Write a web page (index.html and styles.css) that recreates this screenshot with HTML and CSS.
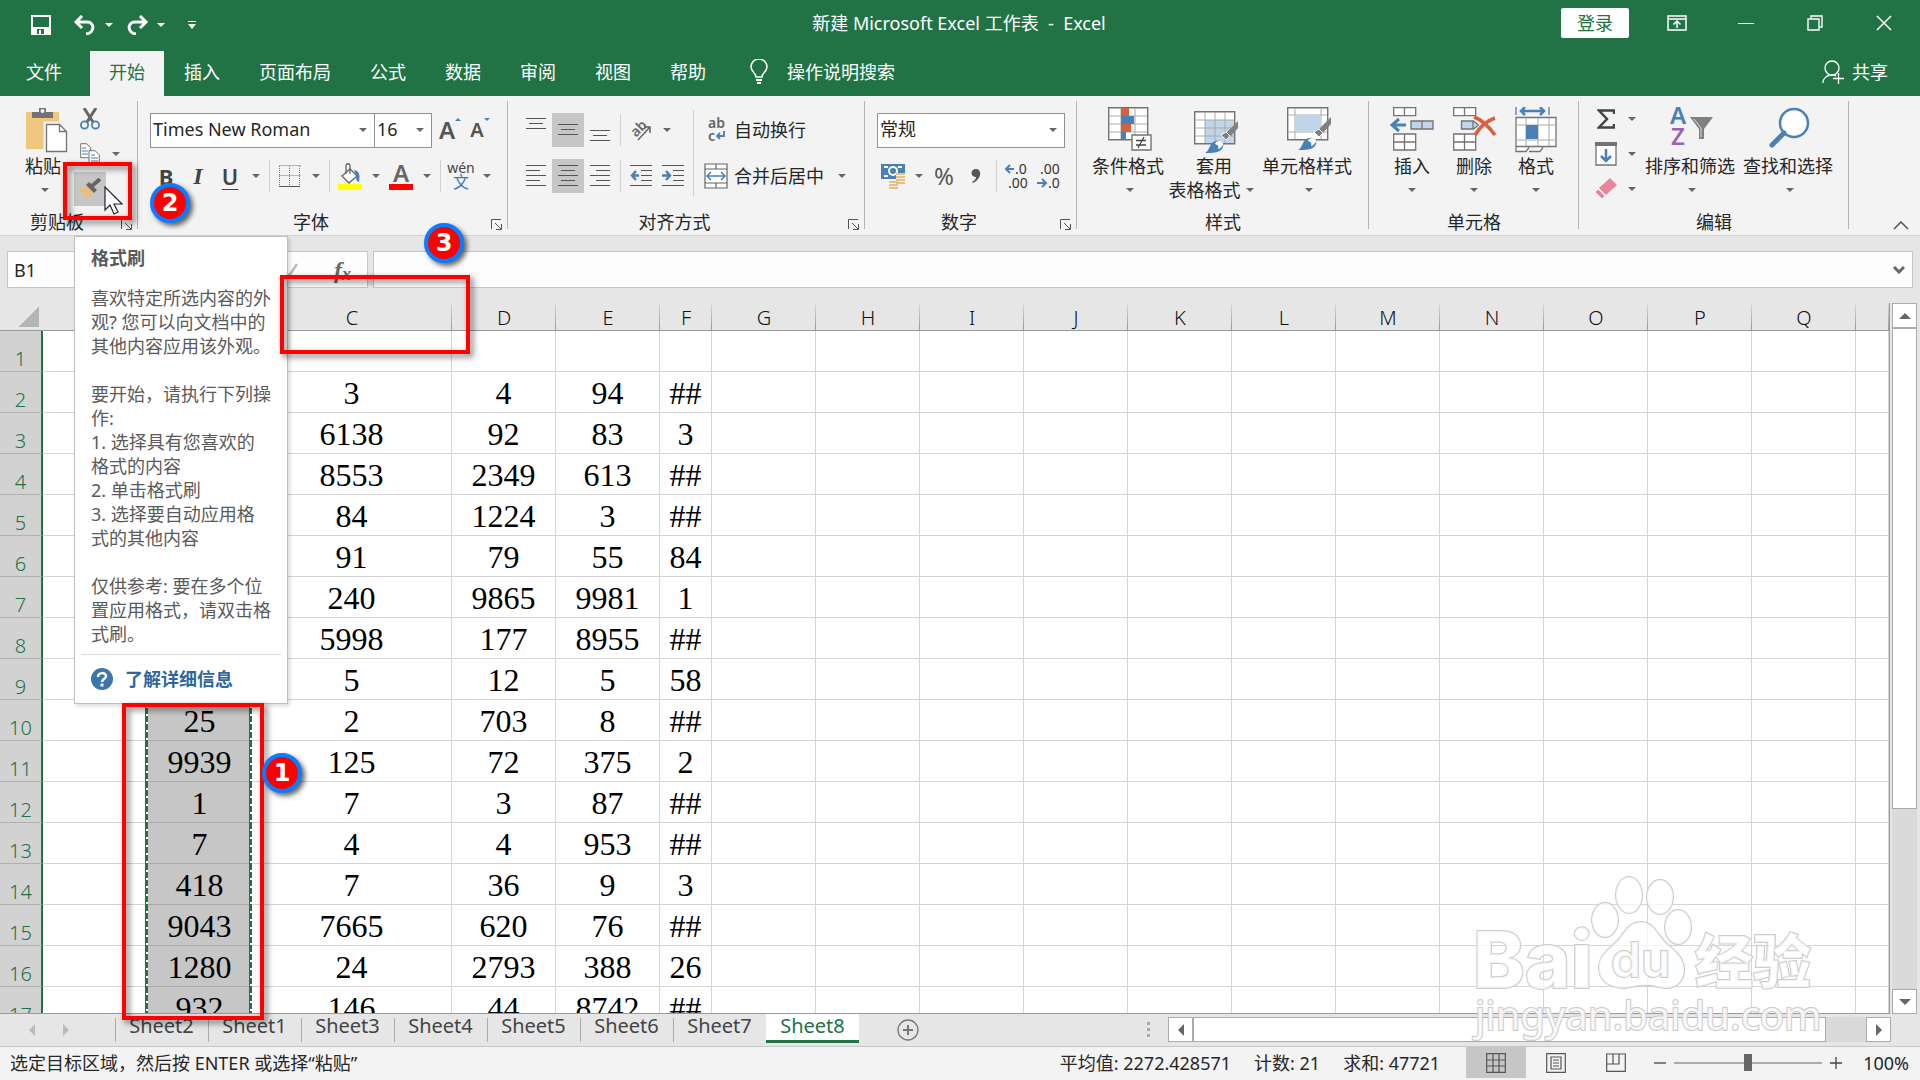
FILE: index.html
```html
<!DOCTYPE html>
<html lang="zh-CN">
<head>
<meta charset="utf-8">
<title>新建 Microsoft Excel 工作表 - Excel</title>
<link rel="stylesheet" href="styles.css">
</head>
<body>
<div class="app">
  <header class="titlebar">
    <div class="quick">
      <button class="qbtn" aria-label="保存"><svg width="20" height="20" viewBox="0 0 20 20"><path d="M1 1h18v18H1z" fill="none" stroke="#fff" stroke-width="2"/><path d="M1 12h18v7H1z" fill="#fff"/><path d="M6 14h7v5H6z" fill="#217346"/><path d="M8 15h2v4H8z" fill="#fff"/></svg></button>
      <button class="qbtn" aria-label="撤消"><svg width="24" height="20" viewBox="0 0 24 20"><path d="M9 1 3 7l6 6M3 7h11c8 0 8 11-1 12" fill="none" stroke="#fff" stroke-width="3"/></svg></button>
      <span class="dd light"></span>
      <button class="qbtn" aria-label="恢复"><svg width="24" height="20" viewBox="0 0 24 20"><path d="m15 1 6 6-6 6M21 7H10c-8 0-8 11 1 12" fill="none" stroke="#fff" stroke-width="3"/></svg></button>
      <span class="dd light"></span>
      <button class="qbtn last" aria-label="自定义快速访问工具栏"><svg width="8" height="8" viewBox="0 0 8 8"><path d="M0 0h8v1H0zM0 3h8L4 8z" fill="#fff"/></svg></button>
    </div>
    <h1 class="title">新建 Microsoft Excel 工作表 &nbsp;-&nbsp; Excel</h1>
    <div class="window">
      <button class="login">登录</button>
      <button class="wbtn" aria-label="功能区显示选项"><svg width="20" height="16" viewBox="0 0 20 16"><path d="M1 1h18v14H1zM1 4h18M10 13V6M6.500 9.500 10 6l3.500 3.500" fill="none" stroke="#fff" stroke-width="1.500"/></svg></button>
      <button class="wbtn" aria-label="最小化"><svg width="16" height="16" viewBox="0 0 16 16"><path d="M0 8.500h16" stroke="#fff"/></svg></button>
      <button class="wbtn" aria-label="还原"><svg width="16" height="16" viewBox="0 0 16 16"><path d="M1 4h11v11H1zM4 4V1h11v11h-3" fill="none" stroke="#fff" stroke-width="1.400"/></svg></button>
      <button class="wbtn" aria-label="关闭"><svg width="16" height="16" viewBox="0 0 16 16"><path d="m1 1 14 14M15 1 1 15" stroke="#fff" stroke-width="1.500"/></svg></button>
    </div>
  </header>
  <nav class="tabs">
    <button class="tab file">文件</button>
    <button class="tab active">开始</button>
    <button class="tab">插入</button>
    <button class="tab">页面布局</button>
    <button class="tab">公式</button>
    <button class="tab">数据</button>
    <button class="tab">审阅</button>
    <button class="tab">视图</button>
    <button class="tab">帮助</button>
    <button class="tab tell"><svg width="18" height="26" viewBox="0 0 18 26"><path d="M6 18c0-4-5-5-5-10a8 8 0 0 1 16 0c0 5-5 6-5 10z" fill="none" stroke="#fff" stroke-width="1.500"/><path d="M6 20h6v2H6zM7 23h4v2H7z" fill="#fff"/></svg>操作说明搜索</button>
    <button class="tab share"><svg width="22" height="24" viewBox="0 0 22 24"><circle cx="10" cy="8" r="7" fill="none" stroke="#fff" stroke-width="1.300"/><path d="M1 23c0-5 4-8 9-8 2 0 3 0 4 1M11 18.500h11M16.500 13v11" fill="none" stroke="#fff" stroke-width="1.300"/></svg>共享</button>
  </nav>

  <section class="ribbon">
    <div class="group clipboard">
      <div class="body">
        <button class="big paste"><svg width="42" height="46" viewBox="0 0 42 46"><path d="M0 5h33v37H0z" fill="#edc87e"/><path d="M6 5h7V1h7v4h7v6H6z" fill="#737373"/><circle cx="16.500" cy="4" r="2" fill="#f3f3f3"/><path d="M19 16h15l7 8v21H19z" fill="#fff" stroke="#f3f3f3" stroke-width="3"/><path d="M20.500 17.500h13l7 7v20h-20zM33.500 17.500v7h7" fill="#fff" stroke="#737373" stroke-width="1.300"/></svg><span>粘贴</span><i class="dd"></i></button>
        <div class="stack">
          <div class="line"><button class="btn" aria-label="剪切"><svg width="20" height="22" viewBox="0 0 20 22"><path d="m4 0 9 14M16 0 7 14" stroke="#666" stroke-width="3"/><circle cx="4.500" cy="17" r="3.600" fill="none" stroke="#4a80b8" stroke-width="1.800"/><circle cx="15.500" cy="17" r="3.600" fill="none" stroke="#4a80b8" stroke-width="1.800"/></svg></button></div>
          <div class="line"><button class="btn" aria-label="复制"><svg width="20" height="22" viewBox="0 0 20 22"><path d="M.7.7h6l4 4v10h-10z" fill="#fff" stroke="#737373"/><path d="M2 5h4M2 8h6M2 11h6" stroke="#4a80b8"/><path d="M9 7.700h6l4.300 4v10H9z" fill="#fff" stroke="#737373"/><path d="M11 12h4M11 15h7M11 18h7" stroke="#4a80b8"/></svg></button><i class="dd"></i></div>
          <div class="line"><button class="btn on" aria-label="格式刷"><svg width="24" height="22" viewBox="0 0 24 22"><path d="m1 11 9-3 6 7-7 6z" fill="#e9bf7d"/><path d="m8 7 3-3 8 8-3 3z" fill="#666"/><path d="m14 8 8-7" stroke="#666" stroke-width="4"/></svg></button></div>
        </div>
      </div>
      <div class="label"><span>剪贴板</span><button class="launch" aria-label="剪贴板选项"><svg width="11" height="11" viewBox="0 0 11 11"><path d="M.5 10V.5H10M4 4l6 6M10.500 5v5.500H5" fill="none" stroke="#555"/></svg></button></div>
    </div>

    <div class="group font">
      <div class="body rows">
        <div class="row">
          <span class="combo wide"><select aria-label="字体"><option>Times New Roman</option></select></span><span class="combo size"><select aria-label="字号"><option>16</option></select></span>
          <button class="btn grow" aria-label="增大字号"><b>A</b><i class="up"></i></button>
          <button class="btn shrink" aria-label="减小字号"><b>A</b><i class="down"></i></button>
        </div>
        <div class="row">
          <button class="btn bold">B</button><button class="btn ital">I</button><button class="btn under">U</button><i class="dd"></i><i class="sep"></i>
          <button class="btn" aria-label="边框"><svg width="22" height="22" viewBox="0 0 22 22"><path d="M.5.5h21M.5 10.500h21M.5 1v20M10.500 1v20M20.500 1v20" stroke="#777" stroke-dasharray="1 1"/><path d="M0 21.500h21" stroke="#555"/></svg></button><i class="dd"></i><i class="sep"></i>
          <button class="btn" aria-label="填充颜色"><svg width="24" height="27" viewBox="0 0 24 27"><path d="m4 13 8-7 7 7-8 7z" fill="#fff" stroke="#666" stroke-width="1.300"/><path d="M8 11V3c0-3 4-3 4 0v8" fill="none" stroke="#666" stroke-width="1.300"/><path d="M16 7c6 1 6 6 5 12-3-1-3-4-3-7z" fill="#4a80b8"/><path d="M0 21h24v6H0z" fill="#ff0"/></svg></button><i class="dd"></i>
          <button class="btn" aria-label="字体颜色"><svg width="24" height="27" viewBox="0 0 24 27"><text x="12" y="19" text-anchor="middle" class="ia">A</text><path d="M0 21h24v6H0z" fill="red"/></svg></button><i class="dd"></i><i class="sep"></i>
          <button class="btn wen" aria-label="拼音"><small>wén</small><em>文</em></button><i class="dd"></i>
        </div>
      </div>
      <div class="label"><span>字体</span><button class="launch" aria-label="字体选项"><svg width="11" height="11" viewBox="0 0 11 11"><path d="M.5 10V.5H10M4 4l6 6M10.500 5v5.500H5" fill="none" stroke="#555"/></svg></button></div>
    </div>

    <div class="group align">
      <div class="body">
        <div class="rows">
          <div class="row">
            <button class="btn" aria-label="顶端对齐"><svg width="20" height="24" viewBox="0 0 20 24"><path d="M0 .5h20M3 5.500h14M0 10.500h20" stroke="#555"/></svg></button>
            <button class="btn on" aria-label="垂直居中"><svg width="20" height="24" viewBox="0 0 20 24"><path d="M0 6.500h20M3 11.500h14M0 16.500h20" stroke="#555"/></svg></button>
            <button class="btn" aria-label="底端对齐"><svg width="20" height="24" viewBox="0 0 20 24"><path d="M0 12.500h20M3 17.500h14M0 22.500h20" stroke="#555"/></svg></button><i class="sep"></i>
            <button class="btn" aria-label="方向"><svg width="22" height="22" viewBox="0 0 22 22"><text x="1" y="15" transform="rotate(-45 8 11)" class="iab">ab</text><path d="M8 21 20 8M14 8h6v6" fill="none" stroke="#666" stroke-width="1.500"/></svg></button><i class="dd"></i>
          </div>
          <div class="row">
            <button class="btn" aria-label="左对齐"><svg width="20" height="22" viewBox="0 0 20 22"><path d="M0 .5h20M0 5.500h14M0 10.500h20M0 15.500h14M0 20.500h20" stroke="#555"/></svg></button>
            <button class="btn on" aria-label="居中"><svg width="20" height="22" viewBox="0 0 20 22"><path d="M0 .5h20M3 5.500h14M0 10.500h20M3 15.500h14M0 20.500h20" stroke="#555"/></svg></button>
            <button class="btn" aria-label="右对齐"><svg width="20" height="22" viewBox="0 0 20 22"><path d="M0 .5h20M6 5.500h14M0 10.500h20M6 15.500h14M0 20.500h20" stroke="#555"/></svg></button><i class="sep"></i>
            <button class="btn" aria-label="减少缩进量"><svg width="22" height="22" viewBox="0 0 22 22"><path d="M0 .5h22M11 5.500h11M11 10.500h11M11 15.500h11M0 20.500h22" stroke="#555"/><path d="M9 10.500H2M6 6l-4 4.500L6 15" fill="none" stroke="#4a80b8" stroke-width="2.500"/></svg></button>
            <button class="btn" aria-label="增加缩进量"><svg width="22" height="22" viewBox="0 0 22 22"><path d="M0 .5h22M11 5.500h11M11 10.500h11M11 15.500h11M0 20.500h22" stroke="#555"/><path d="M0 10.500h8M4 6l4 4.500L4 15" fill="none" stroke="#4a80b8" stroke-width="2.500"/></svg></button>
          </div>
        </div>
        <i class="sep tall"></i>
        <div class="rows">
          <div class="row"><button class="text"><svg width="24" height="26" viewBox="0 0 24 26"><text x="4" y="11" class="isub">ab</text><text x="4" y="24" class="isub">c</text><path d="M20 14v5h-6M16 16l-3 3 3 3" fill="none" stroke="#4a80b8" stroke-width="1.800"/></svg>自动换行</button></div>
          <div class="row"><button class="text"><svg width="24" height="26" viewBox="0 0 24 26"><path d="M1 1h22v24H1zM1 6h22M1 20h22M12 1v5M12 20v5" fill="#fff" stroke="#666" stroke-width="1.200"/><path d="M3 13h18M7 9l-4 4 4 4M17 9l4 4-4 4" fill="none" stroke="#4a80b8" stroke-width="1.500"/></svg>合并后居中</button><i class="dd far"></i></div>
        </div>
      </div>
      <div class="label"><span>对齐方式</span><button class="launch" aria-label="对齐选项"><svg width="11" height="11" viewBox="0 0 11 11"><path d="M.5 10V.5H10M4 4l6 6M10.500 5v5.500H5" fill="none" stroke="#555"/></svg></button></div>
    </div>

    <div class="group number">
      <div class="body rows">
        <div class="row"><span class="combo format"><select aria-label="数字格式"><option>常规</option></select></span></div>
        <div class="row">
          <button class="btn" aria-label="会计数字格式"><svg width="24" height="26" viewBox="0 0 24 26"><path d="M0 1h24v15H0z" fill="#4a80b8"/><path d="M3 4h4M17 4h4M3 13h4" stroke="#fff" stroke-width="2"/><circle cx="12" cy="8" r="5" fill="#fff"/><circle cx="12" cy="8" r="3" fill="#4a80b8"/><path d="M15 10h9v11H15zM8 17h10v9H8z" fill="#f3f3f3"/><path d="M15 11h9M15 14h9M15 17h9M15 20h9M8 19h9M8 22h9M8 25h9" stroke="#e9bf7d" stroke-width="2"/></svg></button><i class="dd"></i>
          <button class="btn pct">%</button>
          <button class="btn" aria-label="千位分隔样式"><svg width="10" height="16" viewBox="0 0 10 16"><path d="M5 1c6 0 6 10-3 14l-1-1c3-2 4-3 4-5C-1 9-1 1 5 1z" fill="#555"/></svg></button><i class="sep"></i>
          <button class="btn" aria-label="增加小数位数"><svg width="24" height="26" viewBox="0 0 24 26"><text x="10" y="11" class="idec">.0</text><text x="3" y="25" class="idec">.00</text><path d="M9 6H2M5 2 1 6l4 4" fill="none" stroke="#4a80b8" stroke-width="2"/></svg></button>
          <button class="btn" aria-label="减少小数位数"><svg width="24" height="26" viewBox="0 0 24 26"><text x="3" y="11" class="idec">.00</text><text x="11" y="25" class="idec">.0</text><path d="M0 20h8M5 16l4 4-4 4" fill="none" stroke="#4a80b8" stroke-width="2"/></svg></button>
        </div>
      </div>
      <div class="label"><span>数字</span><button class="launch" aria-label="数字选项"><svg width="11" height="11" viewBox="0 0 11 11"><path d="M.5 10V.5H10M4 4l6 6M10.500 5v5.500H5" fill="none" stroke="#555"/></svg></button></div>
    </div>

    <div class="group styles">
      <div class="body">
        <button class="big"><svg width="44" height="46" viewBox="0 0 44 46"><path d="M.7.7h39v32h-39z" fill="#fff" stroke="#737373" stroke-width="1.400"/><path d="M1 9h38M1 17h38M1 25h38M13 1v31M27 1v31" stroke="#aaa"/><path d="M13 1h8v8h-8zM13 17h10v8H13z" fill="#d8603f"/><path d="M13 9h13v8H13zM13 25h5v7h-5z" fill="#4a80b8"/><path d="M24 28h19v15H24z" fill="#fff" stroke="#737373" stroke-width="1.400"/><path d="M28 33.500h10M28 38h10M36 30l-6 11" stroke="#444" stroke-width="1.300"/></svg><span>条件格式</span><i class="dd"></i></button>
        <button class="big"><svg width="46" height="46" viewBox="0 0 46 46"><path d="M1.700 4.700h40v32h-40z" fill="#fff" stroke="#737373" stroke-width="1.400"/><path d="M12 13h29v23H12z" fill="#c0d4ea"/><path d="M2 13h39M2 21h39M2 29h39M12 5v31M22 5v31M32 5v31" stroke="#aaa"/><path d="m45 14-12 12 4 4 8-9z" fill="#808080"/><path d="m28 28 5 5 4-4-4-4z" fill="#808080" stroke="#fff"/><path d="M12 46c5-2 4-11 11-12 7-1 9 4 6 8-3 4-10 4-17 4z" fill="#4a80b8"/><path d="M22 37c2-5 9-3 8 1-2 2-3 4-5 4 1-3 0-4-3-5z" fill="#fff"/></svg><span>套用</span><span class="two">表格格式<i class="dd"></i></span></button>
        <button class="big"><svg width="46" height="46" viewBox="0 0 46 46"><path d="M1.700.7h40v32h-40z" fill="#fff" stroke="#737373" stroke-width="1.400"/><path d="M2 8h39M2 25h39M9 1v31M35 1v31" stroke="#aaa"/><path d="M9 8h25v17H9z" fill="#c0d4ea"/><path d="m45 10-12 12 4 4 8-9z" fill="#808080"/><path d="m28 25 5 5 4-4-4-4z" fill="#808080" stroke="#fff"/><path d="M12 43c5-2 4-11 11-12 7-1 9 4 6 8-3 4-10 4-17 4z" fill="#4a80b8"/><path d="M22 34c2-5 9-3 8 1-2 2-3 4-5 4 1-3 0-4-3-5z" fill="#fff"/></svg><span>单元格样式</span><i class="dd"></i></button>
      </div>
      <div class="label"><span>样式</span></div>
    </div>

    <div class="group cells">
      <div class="body">
        <button class="big"><svg width="44" height="46" viewBox="0 0 44 46"><path d="M3.700.7h22v8h-22zM14.500 1v8M3.700 27h22v16h-22zM3.700 35h22M14.500 27v16" fill="#fff" stroke="#737373" stroke-width="1.300"/><path d="M21 14h22v8H21zM32 14v8" fill="#c0d4ea" stroke="#737373" stroke-width="1.300"/><path d="M16 18H3M9 12l-7 6 7 6" fill="none" stroke="#4a80b8" stroke-width="3"/></svg><span>插入</span><i class="dd"></i></button>
        <button class="big"><svg width="44" height="46" viewBox="0 0 44 46"><path d="M1.700.7h22v8h-22zM12.500 1v8M1.700 27h22v16h-22zM1.700 35h22M12.500 27v16" fill="#fff" stroke="#737373" stroke-width="1.300"/><path d="M9.500 14h12l5 4-5 4h-12zM21 14v8" fill="#c0d4ea" stroke="#737373" stroke-width="1.300"/><path d="M22 10c9 3 15 10 21 18M43 11c-9 3-15 9-20 17" fill="none" stroke="#d8603f" stroke-width="3.500"/></svg><span>删除</span><i class="dd"></i></button>
        <button class="big"><svg width="42" height="46" viewBox="0 0 42 46"><path d="M1 0v8M34 0v8" stroke="#4a80b8" stroke-width="1.300"/><path d="M6 4h23M10 0 6 4l4 4M25 0l4 4-4 4" fill="none" stroke="#4a80b8" stroke-width="2.500"/><path d="M1 10.500h40v29H1zM1 40v4.500h10l3-4M14 44.500h11l3-4" fill="#fff" stroke="#737373" stroke-width="1.300"/><path d="M1 18h40M1 33h40M11 11v28M23 11v28M34 11v28" stroke="#aaa"/><path d="M11 18h12v14H11z" fill="#4a80b8"/></svg><span>格式</span><i class="dd"></i></button>
      </div>
      <div class="label"><span>单元格</span></div>
    </div>

    <div class="group editing">
      <div class="body">
        <div class="stack">
          <div class="line"><button class="btn" aria-label="求和"><svg width="18" height="20" viewBox="0 0 18 20"><path d="M17 5V1.500H2L10 10l-8 8.500h15V15" fill="none" stroke="#444" stroke-width="2.500"/></svg></button><i class="dd"></i></div>
          <div class="line"><button class="btn" aria-label="填充"><svg width="22" height="24" viewBox="0 0 22 24"><path d="M1 1h20v22H1z" fill="#fff" stroke="#737373" stroke-width="1.300"/><path d="M0 0h22v4H0z" fill="#737373"/><path d="M11 7v12M6 14l5 5 5-5" fill="none" stroke="#4a80b8" stroke-width="2.500"/></svg></button><i class="dd"></i></div>
          <div class="line"><button class="btn" aria-label="清除"><svg width="22" height="22" viewBox="0 0 22 22"><path d="m15 1 6 6-10 9-6-6z" fill="#e8879c" stroke="#e8879c" stroke-width="1.500" stroke-linejoin="round"/><path d="m3 12 6 6-2 2-6-6z" fill="#e8879c" stroke="#e8879c" stroke-linejoin="round"/></svg></button><i class="dd"></i></div>
        </div>
        <button class="big edit"><svg width="44" height="46" viewBox="0 0 44 46"><text x="0" y="17" class="iaz blue">A</text><text x="1" y="38" class="iaz violet">Z</text><path d="M20 10h23L34 22v10h-5V22z" fill="#808080"/><path d="m24 12 7 9v9" fill="none" stroke="#ddd"/></svg><span>排序和筛选</span><i class="dd"></i></button>
        <button class="big edit"><svg width="42" height="46" viewBox="0 0 42 46"><circle cx="25" cy="16" r="14" fill="#fff" stroke="#4a80b8" stroke-width="2.500"/><path d="M15 26 3 38" stroke="#4a80b8" stroke-width="5" stroke-linecap="round"/></svg><span>查找和选择</span><i class="dd"></i></button>
      </div>
      <div class="label"><span>编辑</span></div>
    </div>
    <button class="collapse" aria-label="折叠功能区"><svg width="16" height="9" viewBox="0 0 16 9"><path d="m1 8 7-7 7 7" fill="none" stroke="#555" stroke-width="1.500"/></svg></button>
  </section>

  <section class="formula">
    <input class="namebox" aria-label="名称框" value="B1">
    <div class="fxbox"><button aria-label="输入"><svg width="14" height="14" viewBox="0 0 14 14"><path d="m1 8 4 5 8-12" fill="none" stroke="#bbb" stroke-width="2.500"/></svg></button><button class="fx" aria-label="插入函数">f<sub>x</sub></button></div>
    <div class="inputbox"><input aria-label="编辑栏"><svg width="12" height="9" viewBox="0 0 12 9"><path d="m1 2 5 5 5-5" fill="none" stroke="#666" stroke-width="3"/></svg></div>
  </section>

  <main class="work">
    <div class="sheet">
      <table class="grid">
        <colgroup><col class="c0"><col class="ca"><col class="cm"><col class="cw"><col class="cm"><col class="cm"><col class="cs"><col class="cm"><col class="cm"><col class="cm"><col class="cm"><col class="cm"><col class="cm"><col class="cm"><col class="cm"><col class="cm"><col class="cm"><col class="cm"><col></colgroup>
        <thead><tr><th class="corner"></th><th></th><th></th><th>C</th><th>D</th><th>E</th><th>F</th><th>G</th><th>H</th><th>I</th><th>J</th><th>K</th><th>L</th><th>M</th><th>N</th><th>O</th><th>P</th><th>Q</th><th></th></tr></thead>
        <tbody id="rows"></tbody>
      </table>
    </div>
    <div class="vscroll"><button aria-label="向上滚动"><i class="tri t-up"></i></button><div class="vthumb"></div><div class="track"></div><button aria-label="向下滚动"><i class="tri t-down"></i></button></div>
  </main>

  <section class="sheets">
    <div class="nav"><i class="tri t-left"></i><i class="tri t-right"></i></div>
    <button class="stab">Sheet2</button><button class="stab">Sheet1</button><button class="stab">Sheet3</button><button class="stab">Sheet4</button><button class="stab">Sheet5</button><button class="stab">Sheet6</button><button class="stab">Sheet7</button><button class="stab current">Sheet8</button>
    <button class="add" aria-label="新工作表"><svg width="22" height="22" viewBox="0 0 22 22"><circle cx="11" cy="11" r="10" fill="none" stroke="#777" stroke-width="1.300"/><path d="M11 6v10M6 11h10" stroke="#777" stroke-width="2"/></svg></button>
    <svg class="dots" width="4" height="16" viewBox="0 0 4 16"><path d="M0 0h3v3H0zM0 6h3v3H0zM0 12h3v3H0z" fill="#aaa"/></svg>
    <div class="hscroll"><button aria-label="向左滚动"><i class="tri t-left"></i></button><div class="hthumb"></div><div class="track"></div><button aria-label="向右滚动"><i class="tri t-right"></i></button></div>
  </section>

  <footer class="status">
    <span class="message">选定目标区域，然后按 ENTER 或选择“粘贴”</span>
    <span>平均值: 2272.428571</span><span>计数: 21</span><span>求和: 47721</span>
    <div class="views">
      <button class="view on" aria-label="普通"><svg width="20" height="20" viewBox="0 0 20 20"><path d="M.7.7h18.600v18.600H.7zM1 7h18M1 13h18M7 1v18M13 1v18" fill="none" stroke="#555" stroke-width="1.200"/></svg></button>
      <button class="view" aria-label="页面布局"><svg width="20" height="20" viewBox="0 0 20 20"><path d="M.7.7h18.600v18.600H.7zM5 4h10v12H5zM7 7h6M7 10h6M7 13h6" fill="none" stroke="#555" stroke-width="1.200"/></svg></button>
      <button class="view" aria-label="分页预览"><svg width="20" height="20" viewBox="0 0 20 20"><path d="M.7 1h18.600v17.300H.7zM1 11h12V1M7 1v10" fill="none" stroke="#555" stroke-width="1.200"/></svg></button>
    </div>
    <div class="zoom"><svg width="12" height="12" viewBox="0 0 12 12"><path d="M0 6h12" stroke="#444" stroke-width="1.300"/></svg><input type="range" aria-label="缩放" min="0" max="200" value="100"><svg width="12" height="12" viewBox="0 0 12 12"><path d="M0 6h12M6 0v12" stroke="#444" stroke-width="1.300"/></svg></div>
    <span>100%</span>
  </footer>

  <svg class="watermark" width="350" height="180" viewBox="0 0 350 180" aria-hidden="true">
    <g class="wm">
      <text x="-2" y="114" class="wbai">Bai</text>
      <path d="M166 48c13 0 17 14 26 22s18 14 17 28c-2 15-15 18-25 15-9-3-19-2-28 0-14 3-31-2-32-18-1-14 12-21 20-30 6-7 10-17 22-17z"/>
      <ellipse cx="130" cy="46" rx="13" ry="17"/><ellipse cx="154" cy="21" rx="13" ry="18"/><ellipse cx="185" cy="23" rx="13" ry="17"/><ellipse cx="203" cy="53" rx="13" ry="17"/>
      <text x="136" y="103" class="wdu">du</text>
      <text x="220" y="109" class="wcn">经验</text>
      <text x="0" y="156" class="wurl">jingyan.baidu.com</text>
    </g>
  </svg>

  <aside class="tooltip" role="tooltip">
    <h2>格式刷</h2>
    <p>喜欢特定所选内容的外<br>观? 您可以向文档中的<br>其他内容应用该外观。<br><br>要开始，请执行下列操<br>作:<br>1. 选择具有您喜欢的<br>格式的内容<br>2. 单击格式刷<br>3. 选择要自动应用格<br>式的其他内容<br><br>仅供参考: 要在多个位<br>置应用格式，请双击格<br>式刷。</p>
    <a href="#more"><svg width="22" height="22" viewBox="0 0 22 22"><circle cx="11" cy="11" r="11" fill="#3f74ad"/><path d="M7 9c0-5 8-5 8-1 0 3-4 3-4 6" fill="none" stroke="#fff" stroke-width="2.500"/><path d="M9.500 15.500h3v3h-3z" fill="#fff"/></svg>了解详细信息</a>
  </aside>

  <div class="frame frame-1"></div>
  <div class="frame frame-2"></div>
  <div class="frame frame-3"></div>
  <span class="badge badge-1">1</span>
  <span class="badge badge-2">2</span>
  <span class="badge badge-3">3</span>
  <svg class="cursor" width="20" height="30" viewBox="0 0 20 30"><path d="M1 1v23l5-5 4 9 4-2-4-8h8z" fill="#fff" stroke="#223" stroke-width="1.200"/></svg>
</div>
<script src="grid.js"></script>
</body>
</html>
```
FILE: grid.js
```js
const data = [
  ["", "", "", "", ""],
  ["", "3", "4", "94", "##"],
  ["", "6138", "92", "83", "3"],
  ["", "8553", "2349", "613", "##"],
  ["", "84", "1224", "3", "##"],
  ["", "91", "79", "55", "84"],
  ["", "240", "9865", "9981", "1"],
  ["", "5998", "177", "8955", "##"],
  ["", "5", "12", "5", "58"],
  ["25", "2", "703", "8", "##"],
  ["9939", "125", "72", "375", "2"],
  ["1", "7", "3", "87", "##"],
  ["7", "4", "4", "953", "##"],
  ["418", "7", "36", "9", "3"],
  ["9043", "7665", "620", "76", "##"],
  ["1280", "24", "2793", "388", "26"],
  ["932", "146", "44", "8742", "##"]
];
document.getElementById("rows").innerHTML = data.map((row, i) => {
  const values = row.map((v, k) => `<td${k === 0 ? ' class="sel"' : ""}>${v}</td>`).join("");
  return `<tr><th>${i + 1}</th><td></td>${values}${"<td></td>".repeat(12)}</tr>`;
}).join("");
```
FILE: styles.css
```css
* { box-sizing: border-box; }
body {
  margin: 0;
  font: 18px/24px "Noto Sans", "Noto Sans CJK SC", sans-serif;
  color: #262626;
}
button, input, select { font: inherit; color: inherit; margin: 0; }
button { border: 0; padding: 0; background: none; }
svg { display: block; flex: none; }
i { font-style: normal; }

.app {
  position: relative;
  display: flex;
  flex-direction: column;
  height: 100vh;
  overflow: hidden;
  background: #e6e6e6;
}

/* title bar */
.titlebar {
  display: grid;
  grid-template-columns: 1fr auto 1fr;
  align-items: center;
  height: 51px;
  padding: 0 2px 6px 0;
  background: #217346;
  color: #fff;
}
.quick { display: flex; align-items: center; padding: 4px 0 0 31px; }
.qbtn { margin-right: 10px; }
.qbtn + .qbtn { margin-left: 12px; margin-right: 2px; }
.dd + .qbtn { margin-left: 7px; margin-right: 2px; }
.dd + .qbtn.last { margin-left: 18px; }
.title { margin: 0; font-size: 18px; font-weight: 400; }
.window { display: flex; justify-content: flex-end; align-items: center; }
.login {
  width: 68px;
  height: 30px;
  margin-right: 13px;
  border-radius: 2px;
  background: #fff;
  color: #217346;
}
.wbtn { display: grid; place-items: center; width: 69px; height: 40px; }

/* ribbon tabs */
.tabs { display: flex; gap: 1px; height: 45px; background: #217346; color: #fff; }
.tab { padding: 0 19px 3px; }
.file { padding: 0 27px 3px 26px; }
.tab.active { background: #f3f3f3; color: #217346; }
.tell { display: flex; align-items: center; gap: 19px; padding-left: 24px; }
.share { display: flex; align-items: center; gap: 8px; margin-left: auto; padding-right: 32px; }

/* ribbon */
.ribbon {
  display: flex;
  height: 140px;
  border-bottom: 1px solid #d2d2d2;
  background: #f3f3f3;
}
.group {
  display: flex;
  flex-direction: column;
  flex: none;
  background: linear-gradient(#b5b5b5, #b5b5b5) right 5px / 1px 128px no-repeat;
}
.clipboard { width: 138px; }
.font { width: 370px; }
.align { width: 357px; }
.number { width: 212px; }
.styles { width: 292px; }
.cells { width: 210px; }
.editing { width: 270px; }
.body { display: flex; height: 114px; padding-left: 12px; }
.rows { display: flex; flex-direction: column; gap: 12px; padding-top: 17px; }
.row { display: flex; align-items: center; height: 34px; white-space: nowrap; }
.styles .body { padding-left: 9px; }
.editing .body { padding-left: 11px; }
.label {
  display: grid;
  grid-template-columns: 1fr auto 1fr auto;
  align-items: center;
  height: 24px;
}
.label span { grid-column: 2; }
.launch { grid-column: 4; width: 18px; margin: 4px 6px 0 0; padding-left: 7px; }

.btn { display: grid; place-items: center; flex: none; width: 32px; height: 34px; }
.btn.on, .view.on { background: #c6c6c6; }
.dd { display: grid; place-items: center; flex: none; width: 19px; height: 24px; }
.dd::before {
  content: "";
  border: 4px solid transparent;
  border-top-color: #666;
  border-bottom: 0;
}
.dd.light::before { border-top-color: #fff; }
.dd.far { margin-left: 8px; }
.sep { flex: none; width: 9px; height: 32px; background: linear-gradient(#d0d0d0, #d0d0d0) center / 1px 100% no-repeat; }
.sep.tall { height: 86px; margin: 14px 6px 0 0; }
.stack { padding-top: 5px; }
.line { display: flex; align-items: center; height: 35px; }
.big {
  display: flex;
  flex-direction: column;
  align-items: center;
  flex: none;
  width: 84px;
  padding-top: 11px;
  white-space: nowrap;
}
.big svg { margin-bottom: 1px; }
.styles .big svg, .styles .big > .dd, .edit svg, .edit .dd { margin-left: 4px; }
.paste { width: 62px; }
.paste svg { margin-left: 8px; }
.paste .dd { margin-left: 4px; }
.two { display: flex; align-items: center; }
.styles .big:nth-child(2) { width: 88px; }
.styles .big:nth-child(3), .edit { width: 98px; }
.cells .big { width: 62px; }
.text { display: flex; align-items: center; gap: 6px; }

.combo { position: relative; height: 35px; }
.combo select {
  appearance: none;
  width: 100%;
  height: 35px;
  padding: 0 2px 2px;
  border: 1px solid #919191;
  border-radius: 0;
  background: #fff;
}
.combo::after {
  content: "";
  position: absolute;
  right: 8px;
  top: 15px;
  border: 4px solid transparent;
  border-top-color: #666;
  border-bottom: 0;
}
.wide { width: 225px; }
.size { width: 58px; margin-left: -1px; }
.format { width: 188px; }

.grow, .shrink { display: flex; align-items: center; justify-content: center; color: #555; }
.grow { font-size: 24px; padding-left: 4px; }
.shrink { font-size: 20px; }
.grow b, .shrink b { font-weight: 600; }
.up, .down { align-self: flex-start; margin-top: 5px; border: 3px solid transparent; }
.up { border-bottom-color: #4a80b8; border-top: 0; }
.down { border-top-color: #4a80b8; border-bottom: 0; }
.bold, .ital, .under { font-size: 22px; font-weight: 700; color: #444; }
.ital { font-family: "Liberation Serif", serif; font-size: 24px; font-style: italic; }
.under { font-weight: 600; text-decoration: underline; text-decoration-thickness: 1px; text-underline-offset: 4px; }
.wen { align-content: center; color: #444; }
.wen small { font-size: 14px; line-height: 12px; }
.wen em { font-size: 16px; line-height: 16px; font-style: normal; color: #3b78b8; }
.pct { font-size: 24px; color: #555; }
.ia { font: 600 24px "Noto Sans", sans-serif; fill: #666; }
.iab { font: 600 14px "Noto Sans", sans-serif; fill: #666; }
.isub { font: 600 14px "Noto Sans", sans-serif; fill: #666; }
.idec { font: 14px "Noto Sans", sans-serif; fill: #333; }
.iaz { font: 600 24px "Noto Sans", sans-serif; }
.blue { fill: #4a80b8; }
.violet { fill: #9a63b8; }
.collapse { margin: auto 11px 5px auto; }

/* formula bar */
.formula { display: flex; height: 67px; padding: 15px 7px 0; }
.namebox, .fxbox, .inputbox { height: 37px; border: 1px solid #c6c6c6; background: #fdfdfd; }
.namebox { width: 168px; padding: 0 6px; border-radius: 0; }
.fxbox { display: flex; align-items: center; justify-content: flex-end; gap: 36px; width: 180px; margin: 0 5px 0 13px; padding-right: 16px; }
.fx { font: italic 700 24px/24px "Liberation Serif", serif; color: #666; }
.fx sub { font-size: 18px; line-height: 16px; vertical-align: -2px; }
.inputbox { display: flex; align-items: center; flex: 1; padding-right: 7px; }
.inputbox input { flex: 1; border: 0; background: none; }

/* worksheet */
.work { display: flex; gap: 2px; flex: 1; min-height: 0; padding-right: 3px; }
.sheet { flex: 1; min-width: 0; overflow: hidden; border-right: 1px solid #9a9a9a; border-bottom: 1px solid #9a9a9a; }
.grid { table-layout: fixed; width: 100%; border-spacing: 0; border-collapse: separate; }
.c0 { width: 43px; }
.ca { width: 105px; }
.cm { width: 104px; }
.cw { width: 200px; }
.cs { width: 52px; }
.grid th { padding: 0; font: 20px/24px "Noto Sans", sans-serif; font-weight: 300; color: #111; }
.grid thead th {
  height: 28px;
  padding-top: 3px;
  border-bottom: 1px solid #9a9a9a;
  background: linear-gradient(#d8d8d8, #999) right / 1px 100% no-repeat #e6e6e6;
}
.grid thead .corner { background: linear-gradient(to bottom right, transparent 50%, #b5b5b5 50%) 19px 4px / 20px 20px no-repeat #e6e6e6; }
.grid tbody th {
  height: 41px;
  padding-top: 16px;
  border-bottom: 1px solid #b0b0b0;
  border-right: 2px solid #217346;
  background: #d2d2d2;
  color: #217346;
}
.grid td {
  position: relative;
  height: 41px;
  padding: 2px 0 0;
  border-right: 1px solid #d4d4d4;
  border-bottom: 1px solid #d4d4d4;
  background: #fff;
  font: 32px/38px "Liberation Serif", serif;
  text-align: center;
  color: #000;
}
.grid td.sel { border-color: #ababab; background: #c6c6c6; }
td.sel::before, td.sel::after {
  content: "";
  position: absolute;
  top: 0;
  bottom: -1px;
  width: 3px;
  background:
    repeating-linear-gradient(transparent 0 6px, #fff 6px 8px) 1px 0 / 2px 100% no-repeat,
    #217346;
}
td.sel::before { left: -3px; }
td.sel::after { right: -1px; }

.vscroll { display: flex; flex-direction: column; width: 25px; }
.vscroll button, .hscroll button { display: grid; place-items: center; flex: none; width: 25px; height: 25px; border: 1px solid #ababab; background: #fff; }
.vthumb { flex: 480; border: 1px solid #ababab; background: #fff; }
.vscroll .track { flex: 181; }
.track { background: #dadada; }
.tri { border: 6px solid transparent; }
.t-up { border-bottom-color: #666; border-top: 0; }
.t-down { border-top-color: #666; border-bottom: 0; }
.t-left { border-right-color: #666; border-left: 0; }
.t-right { border-left-color: #666; border-right: 0; }

/* sheet tabs */
.sheets { display: flex; height: 32px; padding-right: 29px; }
.nav { display: flex; align-items: center; gap: 28px; width: 115px; padding-left: 29px; }
.nav .t-left { border-right-color: #bbb; }
.nav .t-right { border-left-color: #bbb; }
.stab {
  width: 93px;
  height: 29px;
  padding-bottom: 5px;
  background: linear-gradient(#ababab, #ababab) left 4px / 1px 24px no-repeat;
  font-size: 20px;
  color: #444;
}
.stab.current { border-bottom: 3px solid #217346; background: #fff; padding-bottom: 2px; color: #217346; }
.add { margin: 5px 228px 0 38px; align-self: flex-start; }
.dots { margin: 8px 17px 0 0; }
.hscroll { display: flex; flex: 1; height: 25px; margin-top: 3px; }
.hthumb { flex: 635; border: 1px solid #ababab; background: #fff; }
.hscroll .track { flex: 40; }

/* status bar */
.status {
  display: flex;
  align-items: center;
  gap: 23px;
  height: 34px;
  padding: 0 11px 2px 10px;
  border-top: 1px solid #c6c6c6;
  background: #f3f3f3;
}
.message { margin-right: auto; }
.views { display: flex; align-self: stretch; margin-left: 3px; }
.view { display: grid; place-items: center; width: 60px; height: 31px; }
.zoom { display: flex; align-items: center; gap: 8px; margin: 0 -2px 0 -15px; }
.zoom input { appearance: none; width: 148px; height: 16px; background: linear-gradient(#ababab, #ababab) center / 100% 2px no-repeat; }
.zoom input::-webkit-slider-thumb { appearance: none; width: 8px; height: 17px; background: #666; }

/* tooltip */
.tooltip {
  position: absolute;
  left: 74px;
  top: 236px;
  width: 214px;
  padding: 9px 6px 12px;
  border: 1px solid #bebebe;
  background: #fff;
  box-shadow: 2px 2px 4px rgba(0, 0, 0, .15);
  color: #5a5a5a;
  white-space: nowrap;
}
.tooltip h2 { margin: 0 0 16px; padding-left: 10px; font-size: 18px; line-height: 24px; }
.tooltip p { margin: 0 0 8px; padding-left: 10px; }
.tooltip a {
  display: flex;
  align-items: center;
  gap: 12px;
  padding: 12px 10px 0;
  border-top: 1px solid #dadada;
  font-weight: 700;
  color: #2f669f;
  text-decoration: none;
}

/* annotations */
.frame { position: absolute; border: 4px solid #f00; filter: drop-shadow(3px 3px 3px rgba(0, 0, 0, .55)); }
.frame-1 { left: 122px; top: 703px; width: 142px; height: 317px; }
.frame-2 { left: 63px; top: 162px; width: 69px; height: 58px; }
.frame-3 { left: 280px; top: 275px; width: 190px; height: 79px; }
.badge {
  position: absolute;
  width: 40px;
  height: 40px;
  border: 4px solid #0a7cff;
  border-radius: 50%;
  background: #f00;
  box-shadow: 3px 3px 5px rgba(0, 0, 0, .6);
  font: 700 24px/32px "DejaVu Sans", sans-serif;
  text-align: center;
  color: #fff;
}
.badge-1 { left: 262px; top: 753px; }
.badge-2 { left: 150px; top: 183px; }
.badge-3 { left: 424px; top: 223px; }
.cursor { position: absolute; left: 104px; top: 186px; }
.watermark { position: absolute; right: 95px; bottom: 26px; overflow: visible; pointer-events: none; }
.wm { fill: rgba(255, 255, 255, .75); stroke: #ccc; stroke-width: 2px; paint-order: stroke; }
.wbai { font: 800 78px "Inter", sans-serif; }
.wdu { font: 600 48px "Inter", sans-serif; }
.wcn { font: 900 58px "Noto Sans CJK SC", sans-serif; }
.wurl { font: 40px "Noto Sans", sans-serif; }
```
